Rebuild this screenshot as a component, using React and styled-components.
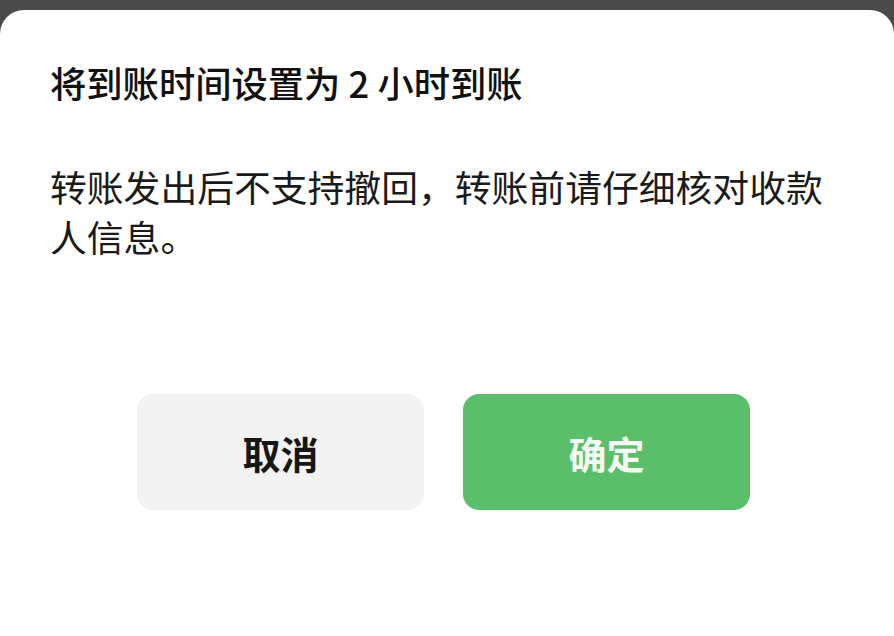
import React from 'react';
import styled, { createGlobalStyle } from 'styled-components';

const GlobalStyle = createGlobalStyle`
  html, body {
    margin: 0;
    padding: 0;
    background: #4a4a4a;
  }
  body {
    font-family: "Noto Sans CJK SC", "Noto Sans", sans-serif;
  }
`;

const Screen = styled.div`
  height: 636px;
  padding-top: 10px;
  box-sizing: border-box;
  overflow: hidden;
`;

const Sheet = styled.div`
  height: 100%;
  background: #ffffff;
  border-radius: 24px 24px 0 0;
  padding: 47px 50px 0;
  box-sizing: border-box;
`;

const Title = styled.h1`
  margin: 0;
  font-size: 36.3px;
  line-height: 50px;
  font-weight: 500;
  color: #111111;
`;

const Message = styled.p`
  margin: 54px 0 0;
  max-width: 790px;
  font-size: 36.8px;
  line-height: 50px;
  font-weight: 400;
  color: #1a1a1a;
`;

const Actions = styled.div`
  display: flex;
  gap: 39px;
  margin: 133px 0 0 87px;
`;

const Button = styled.button`
  width: 287px;
  height: 116px;
  border: none;
  border-radius: 16px;
  font-family: inherit;
  font-size: 38px;
  font-weight: 700;
  background: ${({ $primary }) => ($primary ? '#5bbe6b' : '#f2f2f2')};
  color: ${({ $primary }) => ($primary ? '#f4fbf5' : '#161616')};
  cursor: pointer;
`;

const App = () => {
  return (
    <>
      <GlobalStyle />
      <Screen>
        <Sheet>
          <Title>将到账时间设置为 2 小时到账</Title>
          <Message>转账发出后不支持撤回，转账前请仔细核对收款人信息。</Message>
          <Actions>
            <Button>取消</Button>
            <Button $primary>确定</Button>
          </Actions>
        </Sheet>
      </Screen>
    </>
  );
};

export default App;
